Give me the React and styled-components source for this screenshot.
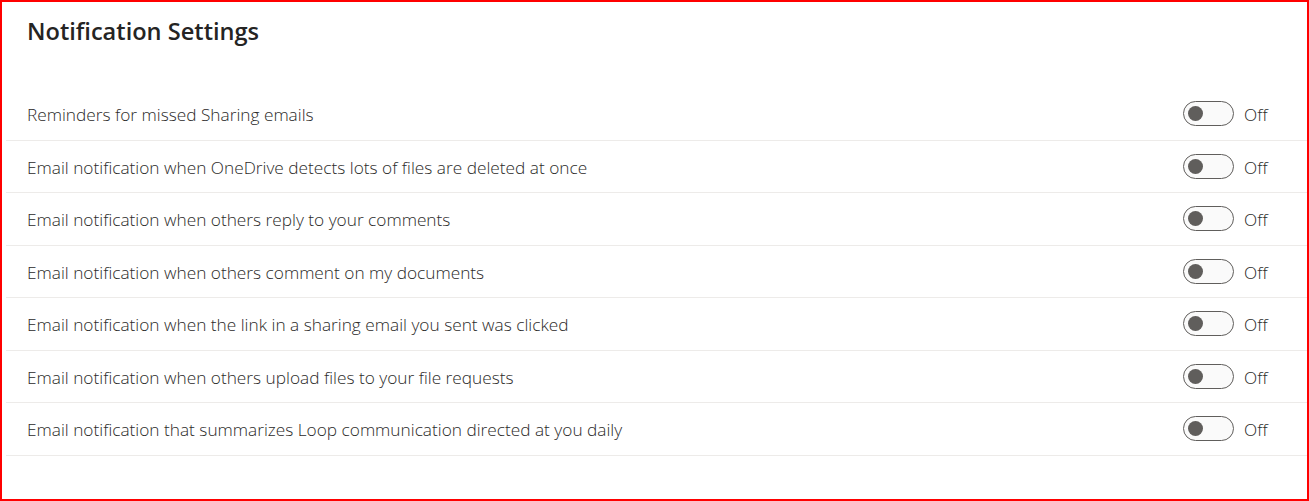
import React, { useState } from "react";
import styled, { createGlobalStyle } from "styled-components";

const Global = createGlobalStyle`
  html, body { margin: 0; padding: 0; background: #ffffff; }
  * { box-sizing: border-box; }
`;

const Frame = styled.div`
  width: 1309px;
  height: 501px;
  border: 2px solid #ff0000;
  background: #ffffff;
  font-family: "Open Sans", "Noto Sans", sans-serif;
  color: #323130;
  display: flex;
  flex-direction: column;
`;

const Title = styled.h1`
  margin: 0;
  padding: 13px 0 0 25px;
  height: 86px;
  font-size: 23.6px;
  font-weight: 590;
  line-height: 32px;
  color: #252423;
`;

const List = styled.div`
  margin-left: 4px;
  display: flex;
  flex-direction: column;
`;

const Row = styled.div`
  height: 52.5px;
  border-bottom: 1px solid #edebe9;
  display: flex;
  align-items: center;
  padding: 0 38px 0 21px;
`;

const Label = styled.span`
  flex: 1;
  font-size: 17.25px;
  font-weight: 350;
  color: #2b2a29;
  padding-top: 2px;
`;

const SwitchTrack = styled.button`
  width: 51px;
  height: 25px;
  border-radius: 13px;
  border: 1.25px solid #605e5c;
  background: ${(p) => (p.$on ? "#0f6cbd" : "#fafafa")};
  padding: 0;
  position: relative;
  cursor: pointer;
  flex: none;
`;

const Knob = styled.span`
  position: absolute;
  top: 50%;
  left: ${(p) => (p.$on ? "31px" : "3.5px")};
  width: 15px;
  height: 15px;
  margin-top: -7.5px;
  border-radius: 50%;
  background: ${(p) => (p.$on ? "#ffffff" : "#605e5c")};
`;

const State = styled.span`
  margin-left: 10px;
  width: 25px;
  font-size: 17.25px;
  font-weight: 350;
  color: #2b2a29;
  padding-top: 2px;
`;

const items = [
  "Reminders for missed Sharing emails",
  "Email notification when OneDrive detects lots of files are deleted at once",
  "Email notification when others reply to your comments",
  "Email notification when others comment on my documents",
  "Email notification when the link in a sharing email you sent was clicked",
  "Email notification when others upload files to your file requests",
  "Email notification that summarizes Loop communication directed at you daily",
];

function SettingRow({ text }) {
  const [on, setOn] = useState(false);
  return (
    <Row>
      <Label>{text}</Label>
      <SwitchTrack $on={on} onClick={() => setOn(!on)} aria-pressed={on}>
        <Knob $on={on} />
      </SwitchTrack>
      <State>{on ? "On" : "Off"}</State>
    </Row>
  );
}

export default function App() {
  return (
    <>
      <Global />
      <Frame>
        <Title>Notification Settings</Title>
        <List>
          {items.map((t) => (
            <SettingRow key={t} text={t} />
          ))}
        </List>
      </Frame>
    </>
  );
}
